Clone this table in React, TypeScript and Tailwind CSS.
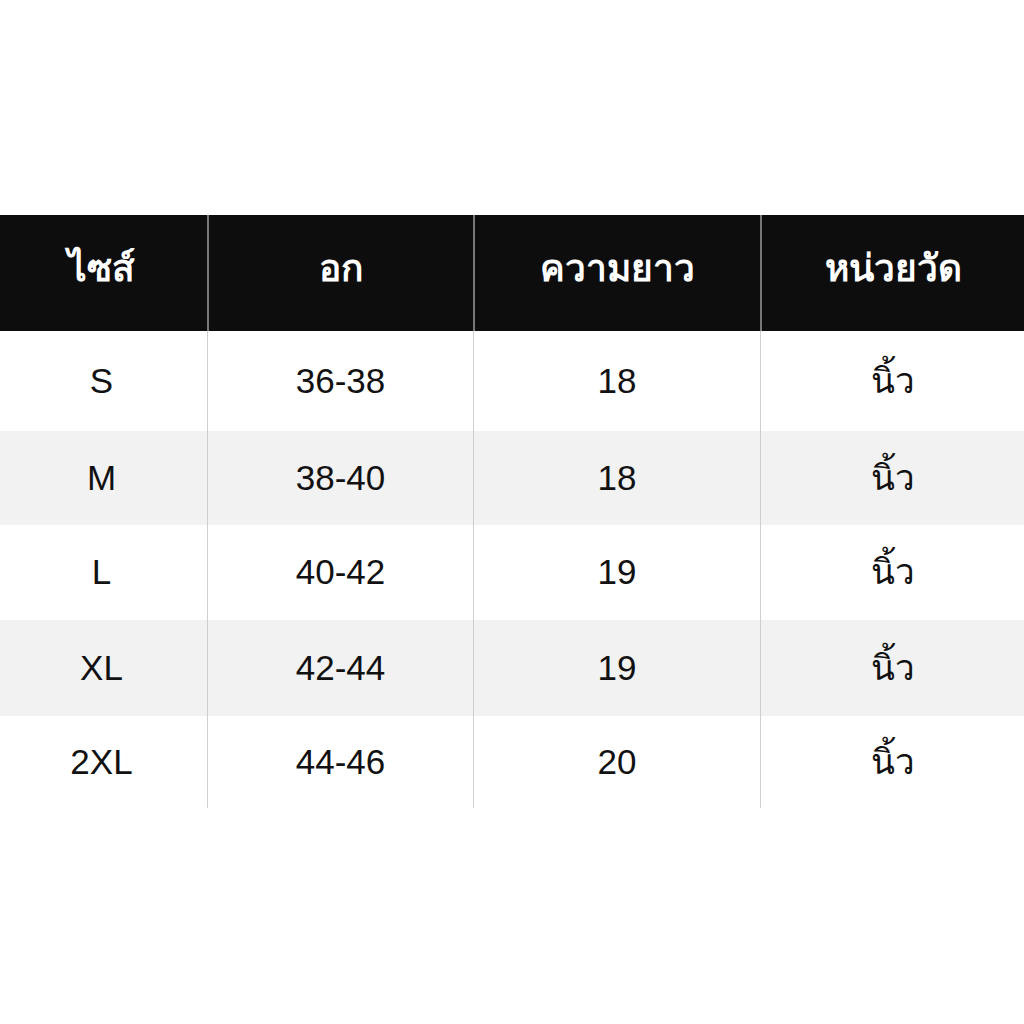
import React from 'react';

const rows = [
    { size: 'S', chest: '36-38', length: '18', h: 'h-[100px]', bg: 'bg-white' },
    { size: 'M', chest: '38-40', length: '18', h: 'h-[94px]', bg: 'bg-[#f2f2f2]' },
    { size: 'L', chest: '40-42', length: '19', h: 'h-[95px]', bg: 'bg-white' },
    { size: 'XL', chest: '42-44', length: '19', h: 'h-[96px]', bg: 'bg-[#f2f2f2]' },
    { size: '2XL', chest: '44-46', length: '20', h: 'h-[92px]', bg: 'bg-white' },
];

const cols = ['w-[207px] pr-[4px]', 'w-[266px]', 'w-[287px]', 'flex-1'];

export default function App() {
    return (
        <div className="w-[1024px] h-[1024px] bg-white pt-[215px] font-['Liberation_Sans',sans-serif] text-[#111]">
            {/* header */}
            <div className="flex h-[116px] bg-[#0d0d0d] text-white font-bold text-[37px]">
                {['ไซส์', 'อก', 'ความยาว', 'หน่วยวัด'].map((t, i) => (
                    <div key={t} className={`${cols[i]} flex items-center justify-center ${i > 0 ? 'border-l-2 border-[#777]' : ''}`}>
                        <span className="-mt-2">{t}</span>
                    </div>
                ))}
            </div>
            {rows.map(r => (
                <div key={r.size} className={`flex ${r.h} ${r.bg} text-[35px]`}>
                    {[r.size, r.chest, r.length, 'นิ้ว'].map((t, i) => (
                        <div key={i} className={`${cols[i]} flex items-center justify-center ${i > 0 ? 'border-l border-[#cfcfcf]' : ''}`}>
                            {t}
                        </div>
                    ))}
                </div>
            ))}
        </div>
    );
}
